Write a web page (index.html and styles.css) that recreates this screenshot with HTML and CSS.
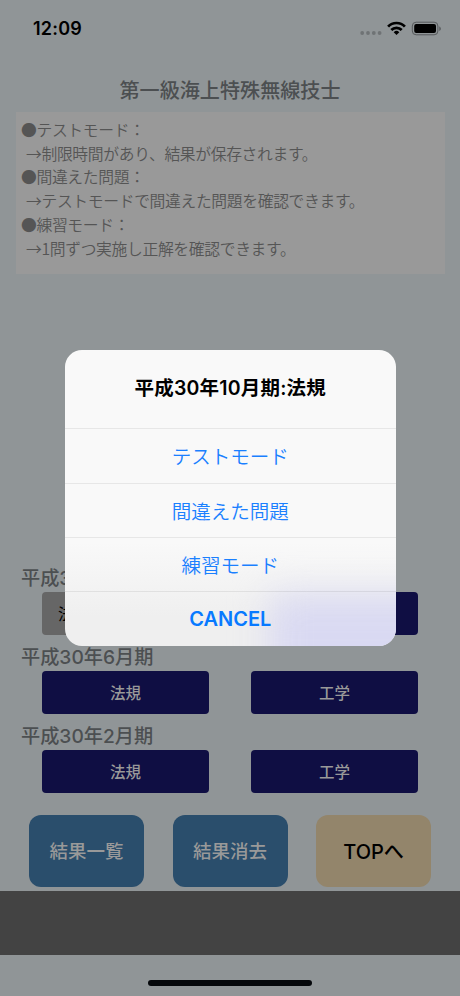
FILE: index.html
```
<!DOCTYPE html>
<html lang="ja">
<head>
    <meta charset="UTF-8">
    <title>第一級海上特殊無線技士</title>
    <link rel="stylesheet" href="styles.css">
</head>
<body>
    <div class="screen">
        <header class="status-bar">
            <span class="time">12:09</span>
            <svg class="status-icons" width="84" height="16" viewBox="0 0 84 16">
                <g fill="#6f7375">
                    <circle cx="3.2" cy="12" r="1.9"/>
                    <circle cx="9" cy="12" r="1.9"/>
                    <circle cx="14.8" cy="12" r="1.9"/>
                    <circle cx="20.6" cy="12" r="1.9"/>
                </g>
                <g fill="none" stroke="#000" stroke-width="2.7">
                    <path d="M29.1 5.7a11.4 11.4 0 0 1 16.8 0"/>
                    <path d="M32.3 9a7.2 7.2 0 0 1 10.4 0"/>
                </g>
                <path d="M37.5 14.1l-2.8-2.9a4 4 0 0 1 5.6 0z"/>
                <rect x="53.3" y="1.2" width="25.6" height="12.6" rx="3.8" fill="none" stroke="#55585a"/>
                <rect x="55.2" y="3.1" width="21.8" height="8.8" rx="2"/>
                <path d="M80.3 5.5c2 .7 2 3.7 0 4.4z" fill="#55585a"/>
            </svg>
        </header>

        <h1 class="title">第一級海上特殊無線技士</h1>
        <div class="info">
            <p>●テストモード：</p>
            <p class="sub">→制限時間があり、結果が保存されます。</p>
            <p>●間違えた問題：</p>
            <p class="sub">→テストモードで間違えた問題を確認できます。</p>
            <p>●練習モード：</p>
            <p class="sub">→1問ずつ実施し正解を確認できます。</p>
        </div>

        <main class="exams">
            <section class="exam">
                <h2>平成30年10月期</h2>
                <div class="subjects">
                    <button class="subject selected">法規</button>
                    <button class="subject">工学</button>
                </div>
            </section>
            <section class="exam">
                <h2>平成30年6月期</h2>
                <div class="subjects">
                    <button class="subject">法規</button>
                    <button class="subject">工学</button>
                </div>
            </section>
            <section class="exam">
                <h2>平成30年2月期</h2>
                <div class="subjects">
                    <button class="subject">法規</button>
                    <button class="subject">工学</button>
                </div>
            </section>
        </main>

        <nav class="menu">
            <button class="menu-button">結果一覧</button>
            <button class="menu-button">結果消去</button>
            <button class="menu-button top">TOPへ</button>
        </nav>
        <div class="banner"></div>
        <footer class="home"><div class="home-indicator"></div></footer>
    </div>

    <div class="overlay">
        <div class="dialog">
            <h2 class="dialog-title">平成30年10月期:法規</h2>
            <button class="action">テストモード</button>
            <button class="action">間違えた問題</button>
            <button class="action">練習モード</button>
            <button class="action cancel">CANCEL</button>
        </div>
    </div>
</body>
</html>
```
FILE: styles.css
```
* {
    box-sizing: border-box;
}
body {
    margin: 0;
    font-family: Inter, "Noto Sans CJK JP", sans-serif;
}
h1, h2, p {
    margin: 0;
}
button {
    border: none;
    padding: 0;
    font-family: inherit;
    cursor: pointer;
}
.screen {
    display: flex;
    flex-direction: column;
    width: 460px;
    height: 996px;
    background: #909597;
    overflow: hidden;
}

/* status bar */
.status-bar {
    display: flex;
    justify-content: space-between;
    align-items: center;
    height: 57px;
    padding: 0 17px 0 33px;
}
.time {
    font-size: 18px;
    font-weight: 600;
    letter-spacing: 0.2px;
}

/* description */
.title {
    height: 55px;
    line-height: 69px;
    text-align: center;
    font-size: 20.1px;
    font-weight: 500;
    color: #4c4f51;
}
.info {
    height: 162px;
    margin: 0 15px 0 16px;
    padding: 6px 5px;
    background: #999;
    color: #555;
    font-family: "Noto Sans CJK JP", sans-serif;
    font-size: 15.8px;
    font-weight: 350;
    line-height: 23.7px;
    letter-spacing: -0.35px;
    white-space: nowrap;
}
.sub {
    padding-left: 5px;
}

/* exam list */
.exams {
    margin-top: auto;
    padding: 0 42px;
}
.exam {
    height: 79px;
}
.exam h2 {
    height: 28px;
    margin-left: -21px;
    line-height: 29px;
    font-size: 19.2px;
    font-weight: 500;
    color: #4c4f51;
}
.subjects {
    display: flex;
    gap: 42px;
}
.subject {
    flex: 1;
    height: 43px;
    padding-bottom: 1px;
    border-radius: 4px;
    background: #0f0e43;
    color: #999;
    font-size: 15.5px;
    font-weight: 500;
}
.subject.selected {
    padding-left: 16px;
    background: #666;
    color: #000;
    text-align: left;
    font-weight: 400;
}

/* bottom menu */
.menu {
    display: flex;
    gap: 28.5px;
    padding: 14px 29px 4.5px;
}
.menu-button {
    flex: 1;
    height: 71.5px;
    padding-bottom: 1px;
    border-radius: 12px;
    background: #2a4e6c;
    color: #999;
    font-size: 18.5px;
    font-weight: 500;
}
.menu-button.top {
    background: #93856b;
    color: #000;
    font-size: 20px;
}
.banner {
    height: 64px;
    background: #434343;
}
.home {
    height: 41px;
    padding-top: 25px;
}
.home-indicator {
    width: 164px;
    height: 6px;
    margin: 0 auto;
    border-radius: 3px;
    background: #05080b;
}

/* dialog */
.overlay {
    position: absolute;
    top: 0;
    left: 0;
    width: 460px;
    height: 996px;
    padding: 350px 64.5px 0 65px;
}
.dialog {
    position: relative;
    height: 296px;
    border-radius: 17px;
    overflow: hidden;
    background: linear-gradient(#f9f9f9 65%, #efefef 90%);
}
/* the navy button showing through the frosted panel */
.dialog::before {
    content: "";
    position: absolute;
    left: 205px;
    top: 245px;
    width: 170px;
    height: 90px;
    background: #d9d9f2;
    filter: blur(18px);
}
.dialog-title, .action {
    position: relative;
}
.dialog-title {
    height: 78.4px;
    line-height: 76px;
    text-align: center;
    font-size: 19.5px;
    font-weight: 600;
    letter-spacing: 0.2px;
}
.action {
    display: block;
    width: 100%;
    height: 54.3px;
    border-top: 1px solid rgba(0, 0, 0, 0.07);
    background: none;
    color: #1a80ff;
    font-size: 19.5px;
    font-weight: 350;
}
.action:nth-of-type(1) {
    padding-bottom: 1px;
}
.action.cancel {
    color: #087aff;
    font-size: 20px;
    font-weight: 600;
}
```
